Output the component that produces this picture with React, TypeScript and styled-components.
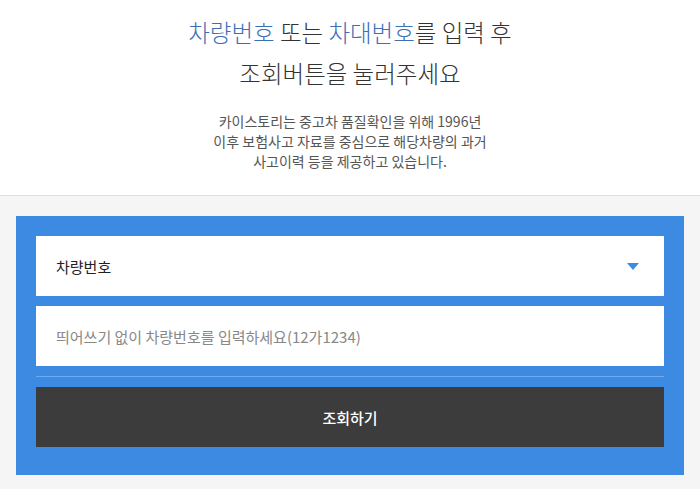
import React, { useState } from 'react';
import styled, { createGlobalStyle } from 'styled-components';

const GlobalStyle = createGlobalStyle`
  html, body {
    margin: 0;
    padding: 0;
    background: #f5f5f5;
    font-family: "Noto Sans CJK KR", "Noto Sans", sans-serif;
  }
  * { box-sizing: border-box; }
`;

const Page = styled.div`
  min-height: 489px;
  background: #f5f5f5;
`;

const Intro = styled.section`
  background: #fff;
  border-bottom: 1px solid #dedede;
  padding: 12px 0 24px;
  text-align: center;
`;

const Title = styled.h1`
  margin: 0;
  font-size: 23.5px;
  line-height: 41px;
  font-weight: 300;
  color: #333;
`;

const Accent = styled.span`
  color: #3b6fb6;
`;

const Description = styled.p`
  margin: 17px 0 0;
  font-size: 14px;
  line-height: 20px;
  color: #555;
`;

const SearchPanel = styled.form`
  margin: 20px 16px 0;
  background: #3d8ae2;
  padding: 20px 20px 28px;
  display: flex;
  flex-direction: column;
  gap: 10px;
`;

const Field = styled.div`
  position: relative;
  height: 60px;
  background: #fff;
  display: flex;
  align-items: center;
  padding: 0 20px;
`;

const SelectLabel = styled.span`
  font-size: 15px;
  color: #222;
  flex: 1;
`;

const Caret = styled.span`
  width: 0;
  height: 0;
  border-left: 6px solid transparent;
  border-right: 6px solid transparent;
  border-top: 7px solid #3d8ae2;
  margin-right: 5px;
`;

const TextInput = styled.input`
  flex: 1;
  border: none;
  outline: none;
  font-family: inherit;
  font-size: 15px;
  color: #222;
  background: transparent;
  padding: 0;
  &::placeholder {
    color: #888;
  }
`;

const Divider = styled.hr`
  margin: 0;
  border: none;
  height: 1px;
  background: #6eaaf0;
`;

const SubmitButton = styled.button`
  height: 60px;
  border: none;
  background: #3c3c3c;
  color: #fff;
  font-family: inherit;
  font-size: 15px;
  font-weight: 500;
  cursor: pointer;
`;

const App: React.FC = () => {
  const [plate, setPlate] = useState('');

  return (
    <Page>
      <GlobalStyle />
      <Intro>
        <Title>
          <Accent>차량번호</Accent> 또는 <Accent>차대번호</Accent>를 입력 후
          <br />
          조회버튼을 눌러주세요
        </Title>
        <Description>
          카이스토리는 중고차 품질확인을 위해 1996년
          <br />
          이후 보험사고 자료를 중심으로 해당차량의 과거
          <br />
          사고이력 등을 제공하고 있습니다.
        </Description>
      </Intro>
      <SearchPanel onSubmit={e => e.preventDefault()}>
        <Field>
          <SelectLabel>차량번호</SelectLabel>
          <Caret />
        </Field>
        <Field>
          <TextInput
            value={plate}
            onChange={e => setPlate(e.target.value)}
            placeholder="띄어쓰기 없이 차량번호를 입력하세요(12가1234)"
          />
        </Field>
        <Divider />
        <SubmitButton type="submit">조회하기</SubmitButton>
      </SearchPanel>
    </Page>
  );
};

export default App;
